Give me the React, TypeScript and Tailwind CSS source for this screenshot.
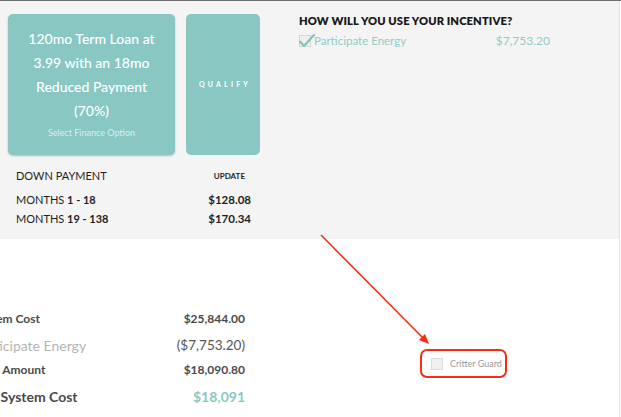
import React from "react";

const teal = "#8bc8c3";

function FinanceCard() {
  return (
    <div className="w-[167px] h-[141px] rounded-[5px] bg-[#89c7c2] shadow-[0_1px_2px_rgba(0,0,0,0.25)] flex flex-col items-center pt-[13px] text-white">
      <div className="text-[14px] leading-[24px] font-medium text-center" style={{ fontFamily: "Lato, sans-serif" }}>
        <div>120mo Term Loan at</div>
        <div>3.99 with an 18mo</div>
        <div>Reduced Payment</div>
        <div>(70%)</div>
      </div>
      <div className="mt-[3px] text-[9px] leading-[14px] text-[#d9efec]" style={{ fontFamily: "Lato, sans-serif" }}>
        Select Finance Option
      </div>
    </div>
  );
}

function QualifyCard() {
  return (
    <div className="w-[74px] h-[141px] rounded-[5px] bg-[#89c7c2] flex items-center justify-center">
      <span className="text-[7px] font-bold tracking-[3.2px] text-white pl-[4px]" style={{ fontFamily: "Lato, sans-serif" }}>
        QUALIFY
      </span>
    </div>
  );
}

function PaymentTable() {
  return (
    <div className="w-[235px] text-[#1f1f1f]" style={{ fontFamily: "Lato, sans-serif" }}>
      <div className="flex items-center justify-between h-[16px]">
        <span className="text-[11px]">DOWN PAYMENT</span>
        <span className="text-[8px] font-bold mr-[6px]">UPDATE</span>
      </div>
      <div className="mt-[8px] flex items-center justify-between h-[16px]">
        <span className="text-[11px]">
          MONTHS <b className="font-bold">1 - 18</b>
        </span>
        <span className="text-[11.5px] font-bold">$128.08</span>
      </div>
      <div className="mt-[3px] flex items-center justify-between h-[16px]">
        <span className="text-[11px]">
          MONTHS <b className="font-bold">19 - 138</b>
        </span>
        <span className="text-[11.5px] font-bold">$170.34</span>
      </div>
    </div>
  );
}

function IncentivePanel() {
  return (
    <div className="pt-[12px] w-[254px]" style={{ fontFamily: "Lato, sans-serif" }}>
      <div className="text-[11.2px] font-extrabold text-[#1a1a1a] tracking-[0.1px] leading-[16px]">
        HOW WILL YOU USE YOUR INCENTIVE?
      </div>
      <div className="mt-[3px] flex items-center justify-between">
        <div className="flex items-center">
          <span className="relative w-[12px] h-[12px] border border-[#d4d4d4] bg-[#efefef] mr-[3px]">
            <svg className="absolute left-[-1px] top-[-3px]" width="16" height="15" viewBox="0 0 16 15">
              <path d="M1 8.5 L5 13 L15 2" fill="none" stroke="#7fc4be" strokeWidth="2.2" strokeLinecap="round" strokeLinejoin="round" />
            </svg>
          </span>
          <span className="text-[11.5px] text-[#8fcdc8]">Participate Energy</span>
        </div>
        <span className="text-[12px] text-[#8fcdc8] mr-[3px]">$7,753.20</span>
      </div>
    </div>
  );
}

function CostSummary() {
  return (
    <div className="ml-[-26px] w-[271px] text-[#4a4a4a]" style={{ fontFamily: "Lato, sans-serif" }}>
      <div className="flex items-center justify-between h-[20px]">
        <span className="text-[12px] font-bold">System Cost</span>
        <span className="text-[12px] font-bold">$25,844.00</span>
      </div>
      <div className="mt-[6px] flex items-center justify-between h-[20px]">
        <span className="text-[14px] text-[#b5b5b5]">Participate Energy</span>
        <span className="text-[13.5px] text-[#555]">($7,753.20)</span>
      </div>
      <div className="mt-[5px] flex items-center justify-between h-[20px]">
        <span className="text-[12px] font-bold">Loan Amount</span>
        <span className="text-[12px] font-bold">$18,090.80</span>
      </div>
      <div className="mt-[6px] flex items-center justify-between h-[20px]">
        <span className="text-[14px] font-bold">Net System Cost</span>
        <span className="text-[14px] font-bold" style={{ color: teal }}>$18,091</span>
      </div>
    </div>
  );
}

export default function App() {
  return (
    <div className="relative w-[621px] h-[417px] overflow-hidden bg-white">
      <div className="h-[1px] bg-[#6e6e6e]" />
      <div className="flex h-[238px] bg-[#f4f4f4] border-r border-[#e2e2e2] w-[620px]">
        <div className="w-[291px] pl-[8px] pt-[13px] flex flex-col">
          <div className="flex gap-[11px]">
            <FinanceCard />
            <QualifyCard />
          </div>
          <div className="pl-[8px] mt-[13px]">
            <PaymentTable />
          </div>
        </div>
        <div className="pl-[8px]">
          <IncentivePanel />
        </div>
      </div>
      <div className="flex w-[620px] border-r border-[#e2e2e2] h-[178px]">
        <div className="w-[420px] pt-[70px]">
          <CostSummary />
        </div>
        <div className="pt-[110px]">
          <div className="w-[87px] h-[29px] rounded-[7px] border-2 border-[#ff2a12] flex items-center pl-[9px]">
            <span className="shrink-0 w-[12px] h-[12px] border border-[#dedede] bg-[#f0f0f0]" />
            <span className="ml-[7px] whitespace-nowrap text-[9px] text-[#9a9a9a]" style={{ fontFamily: "Lato, sans-serif" }}>
              Critter Guard
            </span>
          </div>
        </div>
      </div>
      {/* annotation arrow pointing at the checkbox */}
      <svg className="absolute left-0 top-0 pointer-events-none" width="621" height="417">
        <line x1="321" y1="235" x2="424" y2="339" stroke="#ff2a12" strokeWidth="1.6" />
        <polygon points="429,344 419,340 425,334" fill="#ff2a12" />
      </svg>
    </div>
  );
}
